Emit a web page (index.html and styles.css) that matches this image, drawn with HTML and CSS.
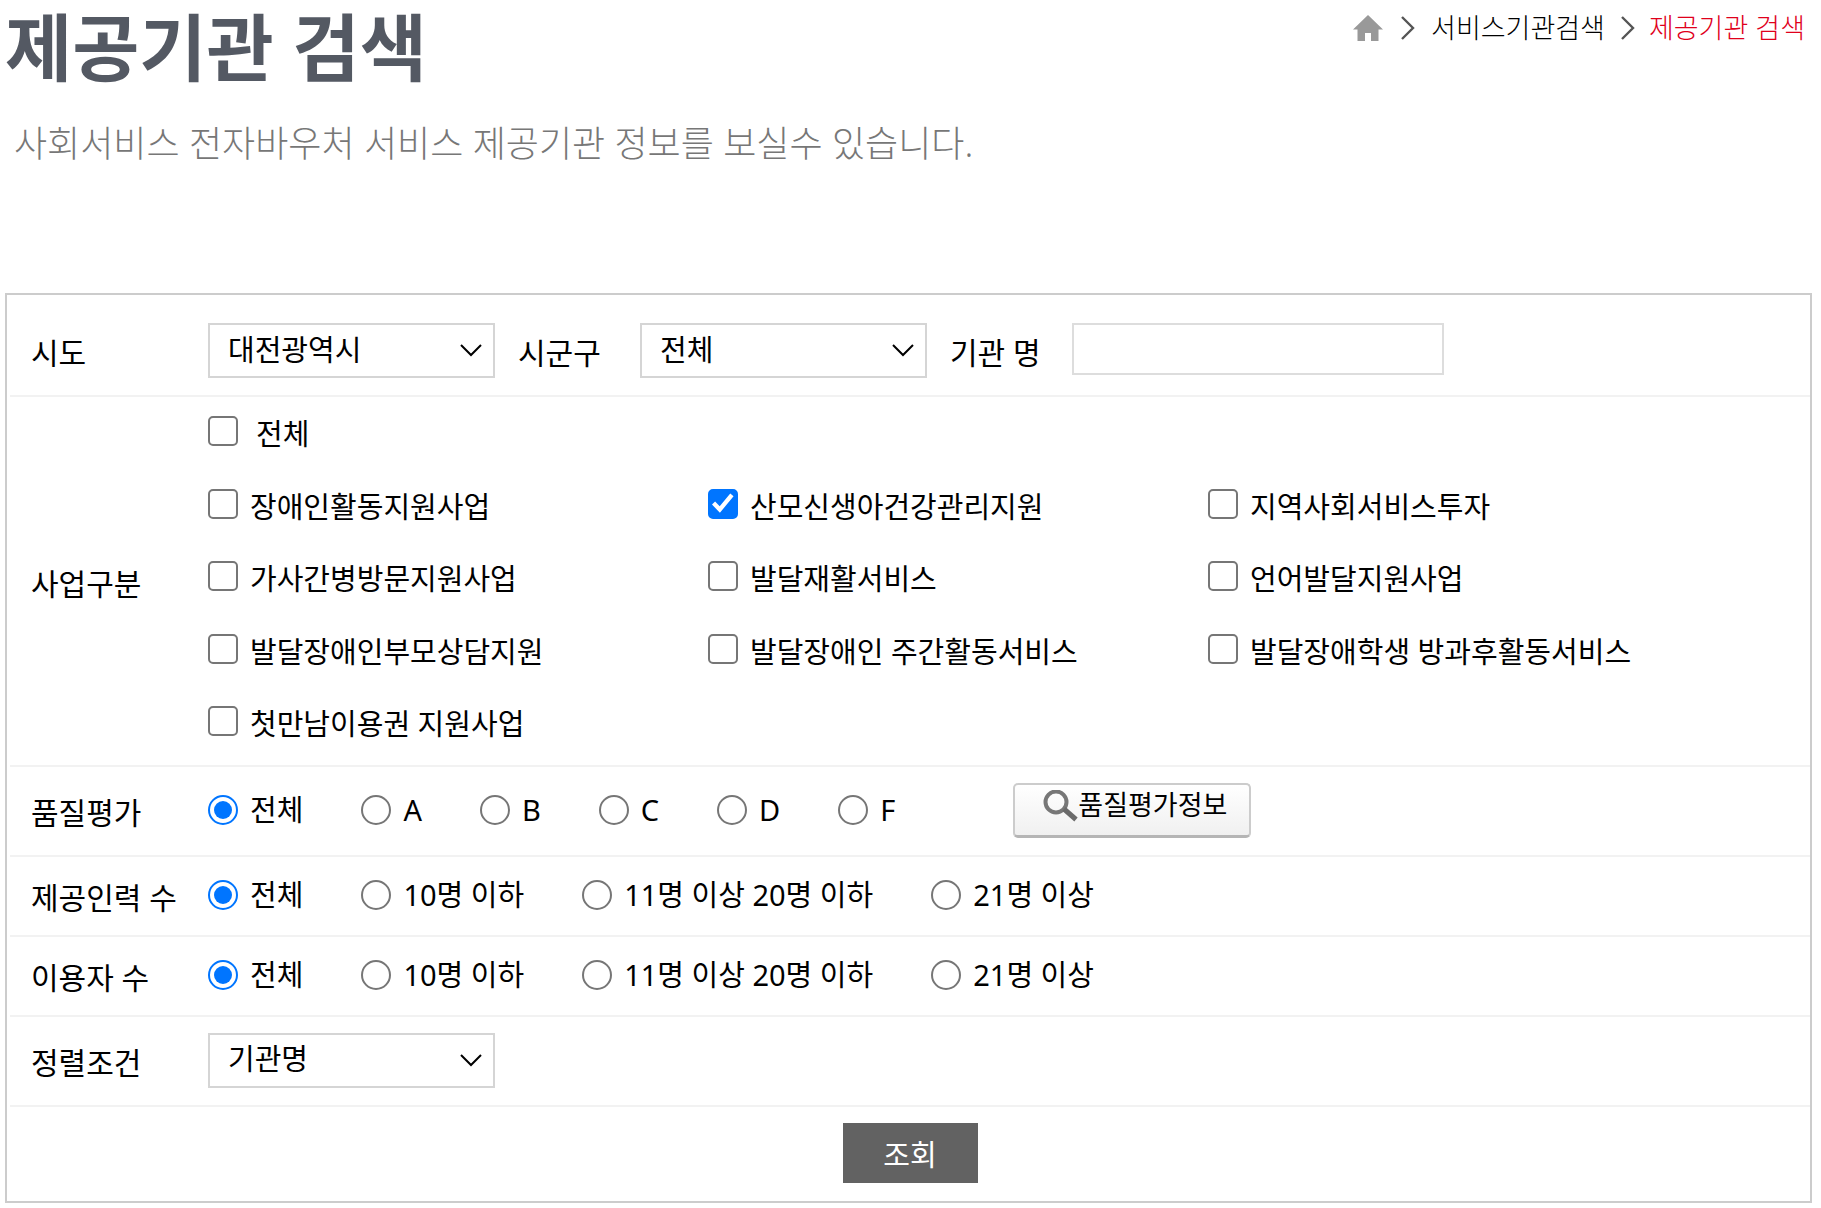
FILE: index.html
```html
<!DOCTYPE html>
<html lang="ko">
<head>
<meta charset="utf-8">
<meta name="viewport" content="width=device-width, initial-scale=1">
<title>제공기관 검색</title>
<link rel="stylesheet" href="styles.css">
</head>
<body>
<header class="page-head">
  <h1 class="page-title">제공기관 검색</h1>
  <nav class="breadcrumb" aria-label="현재 위치">
    <a class="home" href="#" aria-label="홈">
      <svg width="30" height="26" viewBox="0 0 30 26" aria-hidden="true"><path d="M15 0 L30 14.500 H25.500 V26 H18 V18 H12 V26 H4.500 V14.500 H0 Z" fill="#999"/></svg>
    </a>
    <svg class="sep" width="14" height="24" viewBox="0 0 14 24" aria-hidden="true"><path d="M1 1 L12 12 L1 23" fill="none" stroke="#555" stroke-width="2.400"/></svg>
    <a class="crumb" href="#">서비스기관검색</a>
    <svg class="sep" width="14" height="24" viewBox="0 0 14 24" aria-hidden="true"><path d="M1 1 L12 12 L1 23" fill="none" stroke="#555" stroke-width="2.400"/></svg>
    <a class="crumb current" href="#" aria-current="page">제공기관 검색</a>
  </nav>
</header>
<p class="lead">사회서비스 전자바우처 서비스 제공기관 정보를 보실수 있습니다.</p>

<form class="search">
  <div class="row row-region">
    <label class="name" for="sido">시도</label>
    <div class="select"><select id="sido"><option>대전광역시</option></select><svg class="arrow" width="22" height="13" viewBox="0 0 22 13" aria-hidden="true"><path d="M1 1 L11 11 L21 1" fill="none" stroke="#000" stroke-width="2"/></svg></div>
    <label class="name inline-name" for="sigungu">시군구</label>
    <div class="select"><select id="sigungu"><option>전체</option></select><svg class="arrow" width="22" height="13" viewBox="0 0 22 13" aria-hidden="true"><path d="M1 1 L11 11 L21 1" fill="none" stroke="#000" stroke-width="2"/></svg></div>
    <label class="name inline-name" for="org">기관 명</label>
    <input class="text" id="org" type="text">
  </div>

  <div class="row row-business" role="group" aria-labelledby="biz">
    <span class="name" id="biz">사업구분</span>
    <div class="checks">
      <label class="option all"><input type="checkbox"><span>전체</span></label>
      <label class="option"><input type="checkbox"><span>장애인활동지원사업</span></label>
      <label class="option"><input type="checkbox" checked><span>산모신생아건강관리지원</span></label>
      <label class="option"><input type="checkbox"><span>지역사회서비스투자</span></label>
      <label class="option"><input type="checkbox"><span>가사간병방문지원사업</span></label>
      <label class="option"><input type="checkbox"><span>발달재활서비스</span></label>
      <label class="option"><input type="checkbox"><span>언어발달지원사업</span></label>
      <label class="option"><input type="checkbox"><span>발달장애인부모상담지원</span></label>
      <label class="option"><input type="checkbox"><span>발달장애인 주간활동서비스</span></label>
      <label class="option"><input type="checkbox"><span>발달장애학생 방과후활동서비스</span></label>
      <label class="option"><input type="checkbox"><span>첫만남이용권 지원사업</span></label>
    </div>
  </div>

  <div class="row row-tall" role="radiogroup" aria-labelledby="quality">
    <span class="name" id="quality">품질평가</span>
    <div class="radios">
      <label class="option"><input type="radio" name="quality" checked><span>전체</span></label>
      <label class="option"><input type="radio" name="quality"><span>A</span></label>
      <label class="option"><input type="radio" name="quality"><span>B</span></label>
      <label class="option"><input type="radio" name="quality"><span>C</span></label>
      <label class="option"><input type="radio" name="quality"><span>D</span></label>
      <label class="option"><input type="radio" name="quality"><span>F</span></label>
    </div>
    <button class="info" type="button"><svg width="36" height="34" viewBox="0 0 36 34" aria-hidden="true"><circle cx="14" cy="12" r="10.500" fill="none" stroke="#777" stroke-width="4"/><path d="M22 19 L34 29.500" stroke="#6a6a6a" stroke-width="5"/></svg><span>품질평가정보</span></button>
  </div>

  <div class="row" role="radiogroup" aria-labelledby="staff">
    <span class="name" id="staff">제공인력 수</span>
    <div class="radios">
      <label class="option"><input type="radio" name="staff" checked><span>전체</span></label>
      <label class="option"><input type="radio" name="staff"><span>10명 이하</span></label>
      <label class="option"><input type="radio" name="staff"><span>11명 이상 20명 이하</span></label>
      <label class="option"><input type="radio" name="staff"><span>21명 이상</span></label>
    </div>
  </div>

  <div class="row" role="radiogroup" aria-labelledby="users">
    <span class="name" id="users">이용자 수</span>
    <div class="radios">
      <label class="option"><input type="radio" name="users" checked><span>전체</span></label>
      <label class="option"><input type="radio" name="users"><span>10명 이하</span></label>
      <label class="option"><input type="radio" name="users"><span>11명 이상 20명 이하</span></label>
      <label class="option"><input type="radio" name="users"><span>21명 이상</span></label>
    </div>
  </div>

  <div class="row row-tall">
    <label class="name" for="sort">정렬조건</label>
    <div class="select"><select id="sort"><option>기관명</option></select><svg class="arrow" width="22" height="13" viewBox="0 0 22 13" aria-hidden="true"><path d="M1 1 L11 11 L21 1" fill="none" stroke="#000" stroke-width="2"/></svg></div>
  </div>

  <div class="actions">
    <button class="submit" type="submit">조회</button>
  </div>
</form>
</body>
</html>
```

FILE: styles.css
```css
*, *::before, *::after { box-sizing: border-box; }

body {
  margin: 0;
  background: #fff;
  color: #000;
  font-family: "Noto Sans", "Noto Sans CJK KR", sans-serif;
  font-size: 29px;
  line-height: 30px;
}

button, input, select { font: inherit; color: inherit; }

.page-head {
  display: flex;
  justify-content: space-between;
  align-items: flex-start;
  padding: 0 16px 0 5px;
}

.page-title {
  margin: 0;
  font-size: 73px;
  line-height: 94px;
  font-weight: 700;
  color: #545963;
}

.breadcrumb {
  display: flex;
  align-items: center;
  padding-top: 13px;
  font-size: 27px;
  font-weight: 300;
}

.home { display: flex; margin-right: 18px; }
.crumb { color: #000; text-decoration: none; }
.sep { margin-right: 16px; }
.crumb + .sep { margin: 0 14px 0 16px; }
.current { color: #e0001b; }

.lead {
  margin: 0;
  padding: 26px 14px 0;
  font-size: 36px;
  line-height: 48px;
  font-weight: 300;
  color: #777;
}

.search {
  margin: 125px 9px 0 5px;
  padding-left: 3px;
  border: 2px solid #ccc;
}

.row {
  display: flex;
  align-items: center;
  min-height: 80px;
  padding-bottom: 2px;
  border-bottom: 2px solid #f2f2f2;
}
.row-tall { min-height: 90px; }
.row-region { padding: 28px 0 17px; }
.row-business { padding: 0; }

.name {
  flex: none;
  width: 198px;
  padding: 5px 0 0 21px;
  font-size: 30px;
}
.inline-name { width: 145px; padding-left: 23px; }

.select { position: relative; flex: none; width: 287px; }
.select select {
  display: block;
  width: 100%;
  height: 55px;
  padding: 0 40px 2px 18px;
  border: 2px solid #d5d5d5;
  border-radius: 0;
  background: #fff;
  appearance: none;
}
.arrow {
  position: absolute;
  top: 21px;
  right: 13px;
  pointer-events: none;
}

.text {
  align-self: flex-start;
  width: 372px;
  height: 52px;
  padding: 0 12px;
  border: 2px solid #ddd;
  background: #fff;
}

.checks {
  flex: 1;
  display: grid;
  grid-template-columns: 500px 500px 1fr;
  align-content: space-between;
  min-height: 368px;
  padding: 19px 0 29px;
}
.checks .all { grid-column: 1 / -1; gap: 18px; }
.checks span { padding-top: 6px; }

.radios { display: flex; gap: 58px; }

.option {
  display: flex;
  align-items: center;
  gap: 12px;
  height: 30px;
  white-space: nowrap;
}

.option input {
  flex: none;
  display: grid;
  place-items: center;
  width: 30px;
  height: 30px;
  margin: 0;
  border: 2px solid #767676;
  border-radius: 5px;
  background: #fff;
  appearance: none;
}
.option input[type="radio"] { border-radius: 50%; }
.option input:checked { border-color: #0075ff; }
.option input[type="checkbox"]:checked { background: #0075ff; }
.option input[type="radio"]:checked::before {
  content: "";
  width: 18px;
  height: 18px;
  border-radius: 50%;
  background: #0075ff;
}
.option input[type="checkbox"]:checked::before {
  content: "";
  width: 22px;
  height: 22px;
  background: #fff;
  clip-path: polygon(0 55%, 14% 41%, 35% 62%, 83% 4%, 98% 17%, 36% 92%);
}

.info {
  display: flex;
  justify-content: center;
  align-items: flex-start;
  width: 238px;
  height: 55px;
  margin-left: 118px;
  padding: 5px 0 0 5px;
  border: 2px solid #ccc;
  border-bottom: 3px solid #b5b5b5;
  border-radius: 5px;
  background: linear-gradient(#fff, #f0f0f0);
  font-size: 27px;
}

.actions {
  display: flex;
  justify-content: center;
  padding: 16px 0 18px;
}
.submit {
  width: 135px;
  height: 60px;
  padding: 4px 0 0;
  border: 0;
  background: #626262;
  color: #fff;
}
```
